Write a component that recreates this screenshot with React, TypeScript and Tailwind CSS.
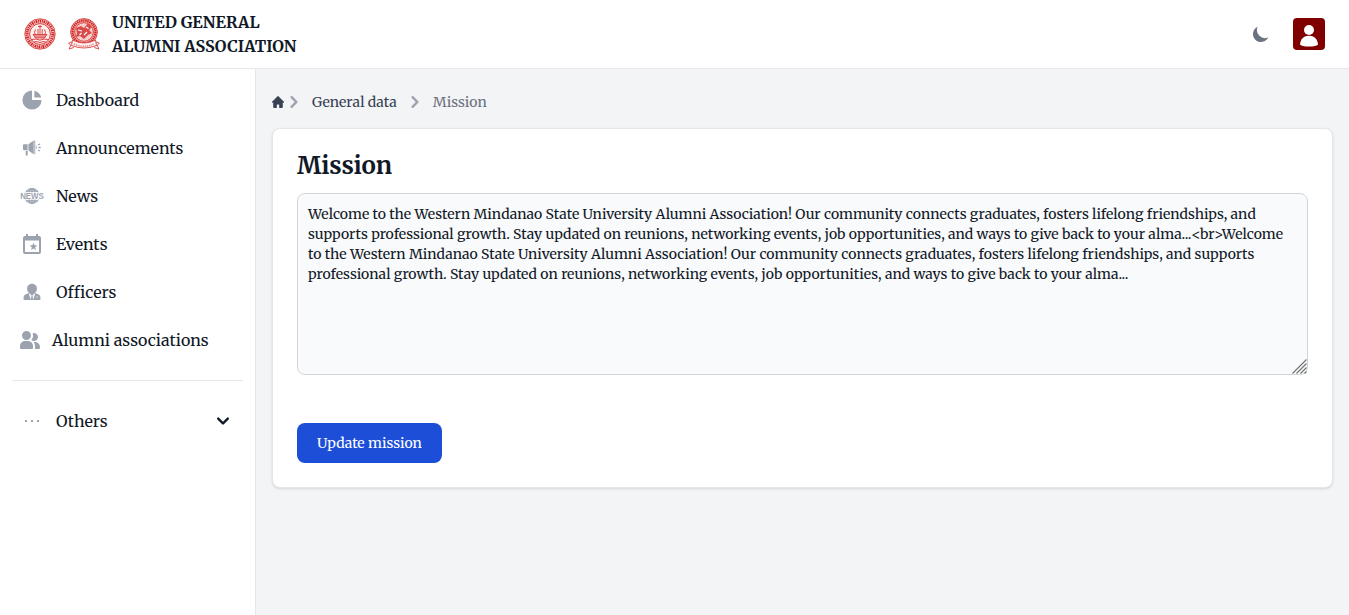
import React from "react";

const mission =
  "Welcome to the Western Mindanao State University Alumni Association! Our community connects graduates, fosters lifelong friendships, and supports professional growth. Stay updated on reunions, networking events, job opportunities, and ways to give back to your alma...<br>Welcome to the Western Mindanao State University Alumni Association! Our community connects graduates, fosters lifelong friendships, and supports professional growth. Stay updated on reunions, networking events, job opportunities, and ways to give back to your alma...";

function UniversitySeal() {
  return (
    <svg viewBox="0 0 32 32" className="size-8">
      <circle cx="16" cy="16" r="15.2" fill="#f9d3d2" stroke="#d73b38" strokeWidth="0.9" />
      <circle cx="16" cy="16" r="12.9" fill="none" stroke="#cf2323" strokeWidth="3" strokeDasharray="1.6 0.8 0.9 0.7" />
      <circle cx="16" cy="16" r="10.4" fill="#fdeeed" stroke="#d32f2f" strokeWidth="0.9" />
      <path d="M16 7v10M14 8.500h4M11.500 11.500q-2 3 0 5.500M20.500 11.500q2 3 0 5.500M14 11v5M18.200 11v5" fill="none" stroke="#d84a48" strokeWidth="1" />
      <path d="M9 16.500h14l-2.500 3.500h-9z" fill="#e58a88" stroke="#d32f2f" strokeWidth="0.8" />
      <path d="M7.500 21.500q4.500-1.200 8.500.6 4-1.800 8.500-.6M10 24q3-1 6 .5 3-1.500 6-.5" fill="none" stroke="#d32f2f" strokeWidth="0.9" />
    </svg>
  );
}

function AlumniSeal() {
  return (
    <svg viewBox="0 0 32 32" className="size-8">
      <circle cx="16" cy="14" r="13.4" fill="#f2b0ae" stroke="#d73b38" strokeWidth="0.9" />
      <circle cx="16" cy="14" r="11.4" fill="none" stroke="#cf2323" strokeWidth="2.2" strokeDasharray="1.400 0.7" />
      <circle cx="16" cy="14" r="9.3" fill="#f6cfce" stroke="#d32f2f" strokeWidth="0.8" />
      <path d="M8 10l5-2 3 2 4-5 4 4-3 3 3 3-4 2-4 4-4-3-5 1 2-3z" fill="#d94a48" />
      <path d="M10 12l4 1M18 9l2.500 1.500M16 17l3-3M11.500 17l2-2" stroke="#fff" strokeWidth="1.2" />
      <path d="M5.500 23.500L.6 25l2 2-1.300 4 4.500-1.500M26.500 23.500l4.900 1.500-2 2 1.300 4-4.500-1.500" fill="#fdf1f0" stroke="#d32f2f" strokeWidth="0.8" />
      <path d="M4.500 22q11.500 6 23 0l1 5.500q-12.500 5-25 0z" fill="#fdf1f0" stroke="#d32f2f" strokeWidth="0.8" />
      <path d="M6 26q10 4.500 20 0" fill="none" stroke="#e27a78" strokeWidth="1.4" strokeDasharray="1.1 0.8" />
    </svg>
  );
}

const PieIcon = () => (
  <svg viewBox="0 0 20 20" className="size-6" fill="currentColor">
    <path d="M2 10a8 8 0 018-8v8h8a8 8 0 11-16 0z" />
    <path d="M12 2.252A8.014 8.014 0 0117.748 8H12V2.252z" />
  </svg>
);

const MegaphoneIcon = () => (
  <svg viewBox="0 0 24 24" className="size-6" fill="currentColor">
    <path d="M4 8.200h3.600v6H4a1 1 0 01-1-1v-4a1 1 0 011-1zM5.700 15h2v4.500h-2zM8.400 8.200L13.700 4.500v13.700l-5.300-3.800z" />
    <path d="M14.300 4.500h.9v13.800h-.9zM15.800 9.300q2 1.900 0 4.200z" />
    <path d="M18 9l2-1M18.400 11.500h2.300M18 14l2 1" stroke="currentColor" strokeWidth="1.300" />
  </svg>
);

const NewsIcon = () => (
  <svg viewBox="0 0 24 24" className="size-6 overflow-visible">
    <g fill="none" stroke="currentColor" strokeWidth="1.200">
      <circle cx="12" cy="12" r="7.300" />
      <ellipse cx="12" cy="12" rx="3.300" ry="7.300" />
      <path d="M12 4.700v14.600M6.500 7.200h11M6.500 16.800h11" />
    </g>
    <path d="M0 8.300h24v7.200H0z" fill="#fff" />
    <text x="0.200" y="15" fontSize="8.600" fontWeight="bold" textLength="23.600" lengthAdjust="spacingAndGlyphs" fill="currentColor" fontFamily="Liberation Sans, sans-serif">NEWS</text>
  </svg>
);

const EventIcon = () => (
  <svg viewBox="0 0 24 24" className="size-6" fill="currentColor">
    <path fillRule="evenodd" d="M6 2h2v2h8V2h2v2h1a2 2 0 012 2v14a2 2 0 01-2 2H5a2 2 0 01-2-2V6a2 2 0 012-2h1zM5 8.500V20h14V8.500z" />
    <path d="M13.500 10.800l1.100 2.500 2.700.2-2.100 1.800.7 2.700-2.400-1.400-2.400 1.400.7-2.700-2.100-1.800 2.700-.2z" />
  </svg>
);

const OfficerIcon = () => (
  <svg viewBox="0 0 24 24" className="size-6" fill="currentColor">
    <circle cx="12" cy="8.700" r="5" />
    <path d="M3.600 20v-2.500q0-2.800 3-3.500l2.200-.9h6.400l2.200.9q3 .7 3 3.500V20z" />
    <path d="M8.700 13.200l2.200 6.800.6-5zM15.300 13.200l-2.200 6.800-.6-5z" fill="#fff" />
    <path d="M15.700 17h2.500" stroke="#d1d5db" strokeWidth="0.900" />
  </svg>
);

const UsersIcon = () => (
  <svg viewBox="0 0 20 18" className="h-[18px] w-5" fill="currentColor">
    <path d="M14 2a3.963 3.963 0 0 0-1.400.267 6.439 6.439 0 0 1-1.331 6.638A4 4 0 1 0 14 2Zm1 9h-1.264A6.957 6.957 0 0 1 15 15v2a2.970 2.970 0 0 1-.184 1H19a1 1 0 0 0 1-1v-1a5.006 5.006 0 0 0-5-5ZM6.500 9a4.500 4.500 0 1 0 0-9 4.500 4.500 0 0 0 0 9ZM8 10H5a5.006 5.006 0 0 0-5 5v2a1 1 0 0 0 1 1h11a1 1 0 0 0 1-1v-2a5.006 5.006 0 0 0-5-5Z" />
  </svg>
);

const DotsIcon = () => (
  <svg viewBox="0 0 24 24" className="size-6" fill="currentColor">
    <path d="M5 11h2v2H5zM11 11h2v2h-2zM17 11h2v2h-2z" />
  </svg>
);

const Chevron = ({ className }: { className: string }) => (
  <svg viewBox="0 0 20 20" className={className} fill="currentColor">
    <path fillRule="evenodd" clipRule="evenodd" d="M7.293 14.707a1 1 0 010-1.414L10.586 10 7.293 6.707a1 1 0 011.414-1.414l4 4a1 1 0 010 1.414l-4 4a1 1 0 01-1.414 0z" />
  </svg>
);

const items = [
  { label: "Dashboard", icon: <PieIcon /> },
  { label: "Announcements", icon: <MegaphoneIcon /> },
  { label: "News", icon: <NewsIcon /> },
  { label: "Events", icon: <EventIcon /> },
  { label: "Officers", icon: <OfficerIcon /> },
  { label: "Alumni associations", icon: <UsersIcon /> },
];

export default function App() {
  return (
    <div className="flex h-screen flex-col overflow-hidden bg-gray-100 font-['Merriweather','DejaVu_Serif_Condensed','DejaVu_Serif',serif] text-[#111827]">
      <header className="flex h-[69px] shrink-0 items-center justify-between border-b border-[#e5e7eb] bg-white px-6">
        <div className="flex items-center gap-3">
          <UniversitySeal />
          <AlumniSeal />
          <div className="text-base leading-6 font-bold whitespace-nowrap">
            <div>UNITED GENERAL</div>
            <div>ALUMNI ASSOCIATION</div>
          </div>
        </div>
        <div className="flex items-center">
          <svg viewBox="0 0 20 20" className="size-5 text-[#6b7280]" fill="currentColor">
            <path d="M17.293 13.293A8 8 0 016.707 2.707a8.001 8.001 0 1010.586 10.586z" />
          </svg>
          <div className="ml-[22px] flex size-8 items-center justify-center rounded bg-[#800000]">
            <svg viewBox="0 0 32 32" className="size-8" fill="#fff">
              <circle cx="16" cy="12" r="5" />
              <path d="M7 26.500C7.500 21 11 17.800 16 17.800s8.500 3.200 9 8.700q-2 2-9 2t-9-2z" />
            </svg>
          </div>
        </div>
      </header>
      <div className="flex min-h-0 flex-1">
        <aside className="w-64 shrink-0 border-r border-[#e5e7eb] bg-white px-3 pt-[11px]">
          <ul className="space-y-2">
            {items.map((item) => (
              <li key={item.label} className="flex h-10 items-center px-2 text-[#9ca3af]">
                {item.icon}
                <span className="ml-3 text-base leading-6 text-[#111827]">{item.label}</span>
              </li>
            ))}
          </ul>
          <div className="mt-5 border-t border-[#e5e7eb] pt-5">
            <button className="flex h-10 w-full items-center px-2 text-[#9ca3af]">
              <DotsIcon />
              <span className="ml-3 flex-1 text-left text-base text-[#111827]">Others</span>
              <Chevron className="size-6 rotate-90 text-[#111827]" />
            </button>
          </div>
        </aside>
        <main className="min-w-0 flex-1 px-4 pt-[21px]">
          <nav className="flex h-6 items-center text-sm text-[#374151]">
            <svg viewBox="0 0 20 20" className="size-3" fill="currentColor">
              <path d="m19.707 9.293-2-2-7-7a1 1 0 0 0-1.414 0l-7 7-2 2a1 1 0 0 0 1.414 1.414L2 10.414V18a2 2 0 0 0 2 2h3a1 1 0 0 0 1-1v-4a1 1 0 0 1 1-1h2a1 1 0 0 1 1 1v4a1 1 0 0 0 1 1h3a2 2 0 0 0 2-2v-7.586l.293.293a1 1 0 0 0 1.414-1.414Z" />
            </svg>
            <Chevron className="-ml-0.5 size-6 text-[#9ca3af]" />
            <span className="ml-1.5">General data</span>
            <Chevron className="ml-1.5 size-6 text-[#9ca3af]" />
            <span className="ml-1.5 text-[#6b7280]">Mission</span>
          </nav>
          <section className="mt-[14px] h-[360px] rounded-lg border border-[#e5e7eb] bg-white px-6 pt-[21px] shadow-sm">
            <h1 className="text-2xl leading-8 font-bold tracking-[-0.1px]">Mission</h1>
            <div className="relative mt-[11px]">
              <textarea
                className="block h-[182px] w-full resize-none rounded-lg border border-[#d1d5db] bg-[#f9fafb] p-2.5 text-sm leading-5 text-[#111827]"
                defaultValue={mission}
              />
              <svg viewBox="0 0 15 15" className="absolute right-[1.5px] bottom-[1.5px] size-[15px]" fill="none" stroke="#707070" strokeWidth="1.1">
                <path d="M.5 14.500l14-14M4.500 14.500l10-10M8.500 14.500l6-6M12.500 14.500l2-2" />
              </svg>
            </div>
            <button className="mt-12 h-10 w-[145px] rounded-lg bg-[#1d4ed8] text-sm text-white">Update mission</button>
          </section>
        </main>
      </div>
    </div>
  );
}
